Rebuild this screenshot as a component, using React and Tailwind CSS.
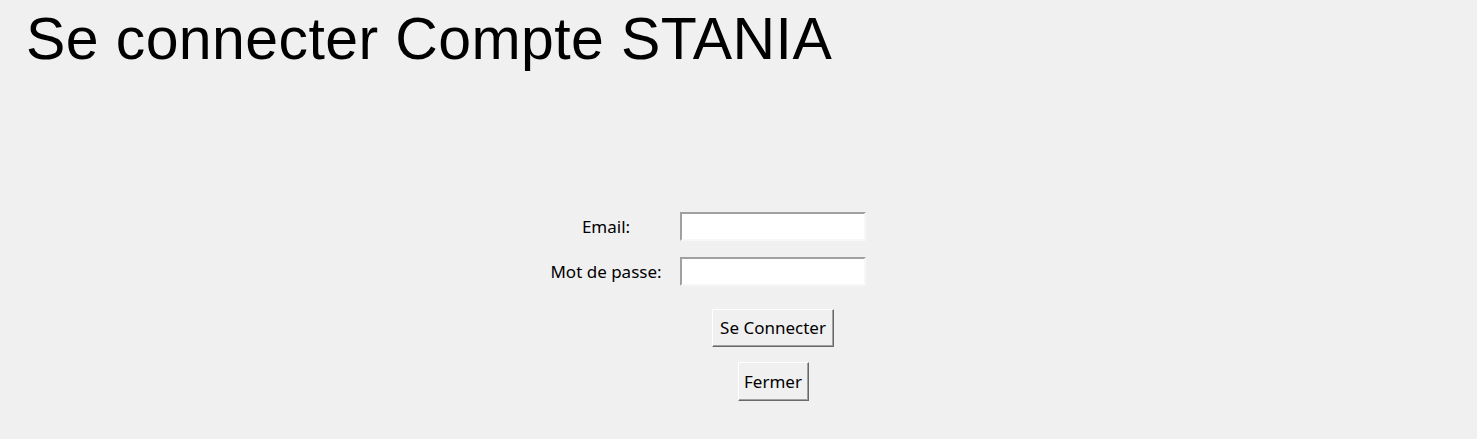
const ui = { fontFamily: '"Noto Sans", "Open Sans", sans-serif' };

const Field = ({ label, type = "text" }) => (
  <>
    <label className="flex items-center justify-center text-[17px] text-black" style={ui}>
      {label}
    </label>
    <input
      type={type}
      className="h-[29px] w-[186px] bg-white border-2 border-t-[#a0a0a0] border-l-[#a0a0a0] border-r-[#f7f7f7] border-b-[#f7f7f7] outline-none px-1 text-[17px]"
      style={ui}
    />
  </>
);

const TkButton = ({ children, className }) => (
  <button
    className={`bg-[#f0f0f0] border border-t-white border-l-white border-r-[#696969] border-b-[#696969] shadow-[inset_-1px_-1px_0_#a0a0a0] text-[17px] text-black ${className}`}
    style={ui}
  >
    {children}
  </button>
);

export default function App() {
  return (
    <div className="min-h-screen bg-[#f0f0f0]">
      <h1
        className="pt-[10px] pl-[26px] text-[59px] leading-none tracking-[0.4px] text-black"
        style={{ fontFamily: '"Liberation Sans", Arial, sans-serif' }}
      >
        Se connecter Compte STANIA
      </h1>

      <div className="mt-[143px] ml-[541px] grid grid-cols-[130px_186px] gap-x-[9px] gap-y-[16px]">
        <Field label="Email:" />
        <Field label="Mot de passe:" type="password" />
        <div className="col-start-2 flex flex-col items-center pt-[7px] gap-[15px]">
          <TkButton className="w-[122px] h-[38px]">Se Connecter</TkButton>
          <TkButton className="w-[71px] h-[39px]">Fermer</TkButton>
        </div>
      </div>
    </div>
  );
}
